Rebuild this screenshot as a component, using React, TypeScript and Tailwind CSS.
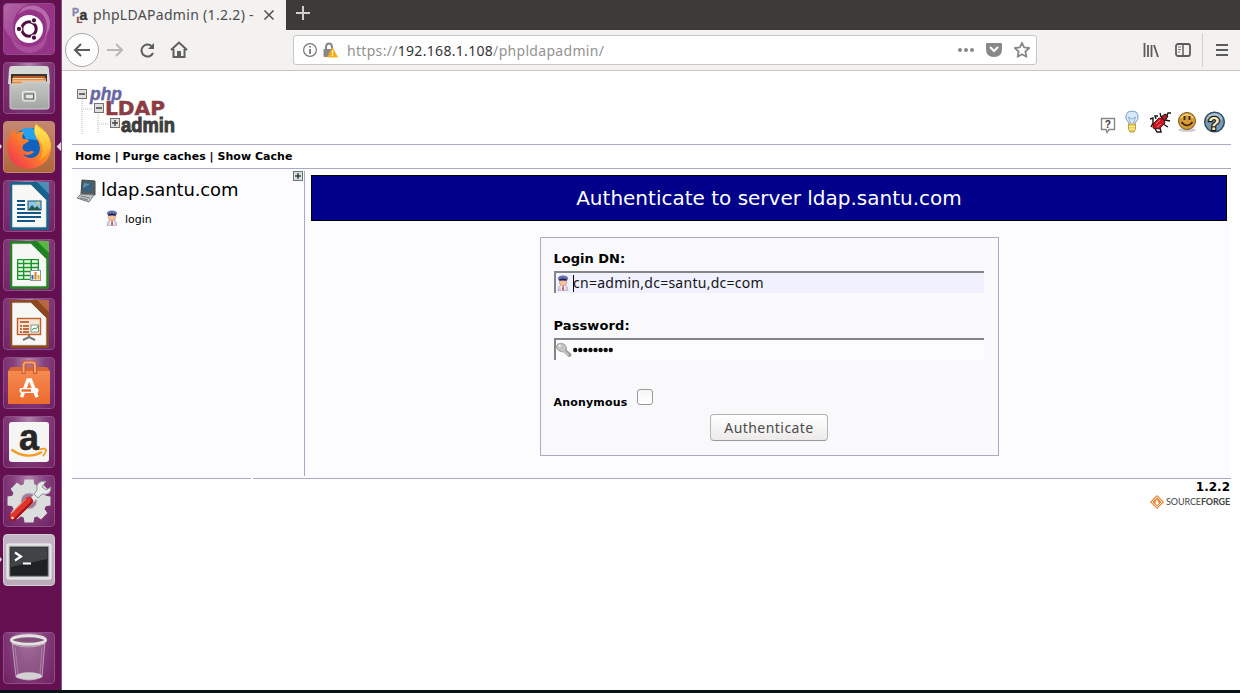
import React from "react";
import type { ReactNode } from "react";

function Tile({ children, tone = "purple" }: { children: ReactNode; tone?: "purple" | "orange" | "silver" }) {
  const tones = {
    purple: "border-[#8d4f87] bg-[radial-gradient(ellipse_at_top,#b184ac_0%,#86407d_45%,#6f2163_100%)]",
    orange: "border-[#c08a72] bg-gradient-to-b from-[#c4876f] to-[#b1663a]",
    silver: "border-[#d5cdd6] bg-gradient-to-b from-[#c3b7c5] to-[#b9abb9]",
  };
  return (
    <div className={`h-[52px] w-[52px] shrink-0 overflow-hidden rounded-[4px] border ${tones[tone]}`}>
      <svg viewBox="0 0 52 52" className="-m-px block h-[52px] w-[52px]">{children}</svg>
    </div>
  );
}

function Document({ color, light, children }: { color: string; light: string; children: ReactNode }) {
  return (
    <>
      <path d="M7 2H39L46 9V48Q46 50 44 50H9Q7 50 7 48Z" fill={color} />
      <path d="M34 2H46V14Z" fill={light} opacity=".85" />
      <path d="M31 2L46 17" stroke={color} strokeWidth="2" />
      <path d="M9.5 5H28L43 20V47H9.5Z" fill="#f7f7f5" stroke="#d9dddd" strokeWidth=".7" />
      {children}
    </>
  );
}

function Dock() {
  return (
    <nav className="relative flex h-[690px] w-[62px] shrink-0 flex-col gap-[7px] border-r border-[#8c5284] bg-[#641050] pl-[3px] pt-[3px]">
      <Tile>
        <defs>
          <linearGradient id="swirl" x1="0" y1="0" x2="1" y2="1"><stop offset="0" stopColor="#c98abf" /><stop offset="1" stopColor="#973087" /></linearGradient>
        </defs>
        <rect width="52" height="52" fill="#953486" />
        <path d="M0 0H30Q12 4 10 22Q9 34 20 41Q4 38 0 20Z" fill="url(#swirl)" opacity=".6" />
        <path d="M14 12Q26 2 38 10Q47 18 42 34Q52 20 42 8Q32 -1 20 5Z" fill="#d19bca" opacity=".55" />
        <path d="M44 26Q42 42 26 44Q14 43 8 34Q12 50 28 50Q46 47 44 26Z" fill="#bb67ae" opacity=".5" />
        <circle cx="26" cy="26" r="14" fill="#fff" />
        <circle cx="26" cy="26" r="7.2" fill="none" stroke="#50103f" strokeWidth="3" />
        <g fill="#50103f" stroke="#fff" strokeWidth="1.1"><circle cx="16" cy="26" r="2.7" /><circle cx="31" cy="17.3" r="2.7" /><circle cx="31" cy="34.7" r="2.7" /></g>
      </Tile>
      <Tile>
        <defs>
          <linearGradient id="drawer" x1="0" y1="0" x2="0" y2="1"><stop offset="0" stopColor="#c6c8c6" /><stop offset="1" stopColor="#a3a5a3" /></linearGradient>
        </defs>
        <path d="M6 8Q6 4 9 4H43Q46 4 46 8L47 22H5Z" fill="#d6d8d5" />
        <path d="M8 12H44V24H8Z" fill="#3c352e" /><path d="M10 14H42V24H10Z" fill="#bb5a26" />
        <path d="M9 16H43V24H9Z" fill="#e58b4b" /><path d="M10 19H43M10 16.5H40" stroke="#f8ddb4" />
        <path d="M7 22H18L20 20H46V45Q46 47 44 47H9Q7 47 7 45Z" fill="url(#drawer)" stroke="#d0d1d0" />
        <rect x="19.5" y="29.5" width="13" height="9.5" rx="1.5" fill="#c8cbc8" stroke="#ededed" />
        <rect x="22" y="32" width="8.5" height="5" fill="#e6e6e6" stroke="#575b58" />
      </Tile>
      <Tile tone="orange">
        <defs>
          <linearGradient id="fox" x1="1" y1="0" x2="0" y2="1"><stop offset="0" stopColor="#ffd23a" /><stop offset=".45" stopColor="#ff8727" /><stop offset="1" stopColor="#ed2458" /></linearGradient>
          <linearGradient id="flame" x1="0" y1="0" x2="0" y2="1"><stop offset="0" stopColor="#fff15c" /><stop offset="1" stopColor="#ff9e20" /></linearGradient>
        </defs>
        <circle cx="27" cy="25" r="18" fill="#1261bd" />
        <path d="M18 9Q27 4 34 10L34 19L23 18Z" fill="#24a2ec" />
        <path d="M4 25Q5 15 11 8L13 13Q17 10 21 11Q18 16 20 18Q26 18 26 20L20 24Q18 30 25 31Q29 29 31 31Q26 36 20 33Q25 39 32 36Q39 32 36 22Q29 12 33 3Q48 12 48 27Q46 46 26 48Q5 46 4 25Z" fill="url(#fox)" />
        <path d="M33 3Q28 12 37 20Q43 30 36 39Q46 35 48 25Q47 15 42 11Q35 7 33 3Z" fill="url(#flame)" />
      </Tile>
      <Tile>
        <Document color="#17618c" light="#5096bd">
          <path d="M14 21H22M14 25H22M14 29H22M14 33H38M14 37H38M14 41H32" stroke="#135786" strokeWidth="2" />
          <rect x="25" y="21" width="13" height="9" fill="#8dc7e8" stroke="#135786" /><path d="M25 30L29 25L32 28L34 26L38 30Z" fill="#285846" /><circle cx="35" cy="23" r="1.5" fill="#f6c94b" />
        </Document>
      </Tile>
      <Tile>
        <Document color="#218322" light="#5bc642">
          <rect x="14" y="20" width="22" height="21" fill="#159b24" />
          {[22.5, 26.5, 30.5, 34.5, 38.5].map((y) => <path key={y} d={`M15.3 ${y}H20M21.3 ${y}H27.5M29 ${y}H34.7`} stroke="#eff6ed" strokeWidth="2.3" />)}
          <rect x="27.5" y="31.5" width="10" height="10" fill="#fff" stroke="#8b9393" /><path d="M29.5 36V40.5" stroke="#276eac" strokeWidth="2" /><path d="M32.5 33V40.5" stroke="#e87b21" strokeWidth="2" /><path d="M35.5 36V40.5" stroke="#e7ad1c" strokeWidth="2" />
        </Document>
      </Tile>
      <Tile>
        <Document color="#8c481f" light="#bd7142">
          <path d="M26 37V40M20 42L26 39L32 42" fill="none" stroke="#777" strokeWidth="2" />
          <rect x="14.5" y="20.5" width="23" height="16" fill="#fae4d4" stroke="#c65d27" strokeWidth="1.4" />
          <path d="M17 24H26M20 28H26M20 31H26M20 34H26" stroke="#a9481b" strokeWidth="1.7" /><path d="M17 28H19M17 31H19M17 34H19" stroke="#a9481b" strokeWidth="1.7" />
          <rect x="28" y="27" width="7.5" height="7" fill="#fff" stroke="#82978b" /><path d="M29 32L31 30L33 31L35 28" fill="none" stroke="#28a745" />
        </Document>
      </Tile>
      <Tile>
        <defs><linearGradient id="bag" x1="0" y1="0" x2="0" y2="1"><stop offset="0" stopColor="#f58a50" /><stop offset="1" stopColor="#ed6b30" /></linearGradient></defs>
        <path d="M5 14L8 10H44L47 14V16H5Z" fill="#d96635" /><path d="M5 14H47V47H5Z" fill="url(#bag)" />
        <path d="M20.5 17V8Q20.5 5.5 23 5.5H29.5Q32 5.5 32 8V17" fill="none" stroke="#c9582f" strokeWidth="4" /><path d="M20.5 16V8Q20.5 5.5 23 5.5H29.5Q32 5.5 32 8V16" fill="none" stroke="#f3a278" strokeWidth="2" />
        <path d="M18.5 40L25 23H27.5L34 40" fill="none" stroke="#fff" strokeWidth="3.5" /><rect x="16.5" y="31" width="19" height="5" rx="2" fill="#fff" /><path d="M18.5 33.5H28" stroke="#ef6c2f" strokeWidth="2.5" />
      </Tile>
      <Tile>
        <rect x="6" y="6" width="40" height="40" rx="3" fill="#f5f5f4" />
        <text x="16" y="33.5" fontFamily="Liberation Sans, sans-serif" fontSize="37" fontWeight="700" fill="#272727" stroke="#272727" strokeWidth=".6" textLength="20" lengthAdjust="spacingAndGlyphs">a</text>
        <path d="M8.5 33.5Q23 44.5 39 36" fill="none" stroke="#f79a1d" strokeWidth="2.3" /><path d="M36 33.5Q43 31.5 43 34Q43 37 40 40" fill="none" stroke="#f79a1d" strokeWidth="1.8" />
      </Tile>
      <Tile>
        <g transform="translate(26 26)" fill="#dcdedd">
          {["rotate(0)", "rotate(45)", "rotate(90)", "rotate(135)"].map((turn) => <path key={turn} transform={turn} d="M-4.5 -21.5H4.5L5.5 -15H-5.5ZM-4.5 21.5H4.5L5.5 15H-5.5Z" />)}
          <circle r="12.5" fill="none" stroke="#dcdedd" strokeWidth="10" />
          <circle r="8" fill="#9f7d9b" stroke="#c4c6c5" />
        </g>
        <path d="M26 28L37 17" stroke="#e6e8e8" strokeWidth="5" />
        <path d="M43 6Q32 6 34 15L31 19L35 23L39 19Q48 21 48 12L43 15L39 12Z" fill="#e9ebeb" stroke="#8e9393" />
        <path d="M10 42L26 26" stroke="#a91418" strokeWidth="8" strokeLinecap="round" /><path d="M9.5 41L25.5 25" stroke="#df352d" strokeWidth="5.5" strokeLinecap="round" /><path d="M8 39L23 24" stroke="#f47d67" /><circle cx="9.5" cy="43" r="1.2" fill="#fff" />
      </Tile>
      <Tile tone="silver">
        <rect x="4" y="10" width="44" height="35" rx="1" fill="#d7d8d7" stroke="#f2f3f2" /><rect x="7" y="13" width="38" height="29" fill="#1e2223" stroke="#4b4f50" /><path d="M8 14H44V25L8 33Z" fill="#555859" opacity=".65" /><path d="M12 18.5L18 22.5L12 26.5M20 29.5H28" fill="none" stroke="#fff" strokeWidth="2.2" />
      </Tile>
      <div className="mt-[39px]">
        <Tile>
          <path d="M9 9L13 45Q26 51 39 45L42 9" fill="#9b6c94" fillOpacity=".55" stroke="#b99bb7" /><ellipse cx="26" cy="44" rx="13" ry="3.7" fill="#d5d0d3" /><ellipse cx="25.5" cy="8" rx="17" ry="4.3" fill="#84517c" stroke="#e2e2df" strokeWidth="3" /><path d="M12 15L15 42M39 15L37 42" stroke="#c8b5c6" opacity=".45" /><path d="M9 12Q25 18 42 12" fill="none" stroke="#bcacb8" />
        </Tile>
      </div>
      <svg className="absolute left-0 top-[140px] h-3 w-[62px]" viewBox="0 0 62 12"><path d="M0 4L2 6.5L0 9ZM61 2V11L56.5 6.5Z" fill="#e7d7e3" /></svg>
      <svg className="absolute left-0 top-[554px] h-3 w-2" viewBox="0 0 8 12"><path d="M0 3L2 5.5L0 8Z" fill="#e7d7e3" /></svg>
    </nav>
  );
}

function Person({ className }: { className: string }) {
  return (
    <svg viewBox="0 0 12 16" className={className}>
      <path d="M1 15.5Q1 11 4 10H8Q11 11 11 15.5Z" fill="#d3d3e4" stroke="#a3a3bf" strokeWidth=".6" /><path d="M4 10L6 12L8 10V15H4Z" fill="#fff" /><path d="M5.4 11H6.7L7.2 15.3H5Z" fill="#d94b4b" />
      <ellipse cx="6" cy="6.8" rx="3.8" ry="3.9" fill="#f5c09c" stroke="#c08b76" strokeWidth=".5" /><path d="M.8 3.5Q1.5 .5 6 .5Q10.5 .5 11.2 3.5L10 5.5Q6 4 2 5.5Z" fill="#6272ad" /><path d="M2 4.2Q6 3 10 4.2L9.5 5.8Q6 5 2.5 5.8Z" fill="#1e2054" />
    </svg>
  );
}

function Browser() {
  return (
    <header>
      <div className="flex h-[30px] bg-[#3c3b37]">
        <div className="flex w-[224px] items-center bg-[#f3f2f1] pl-[10px]">
          <svg viewBox="0 0 16 16" className="-mt-[1px] h-4 w-4 shrink-0"><text x="0" y="9" fontFamily="Liberation Sans" fontSize="10.5" fontWeight="bold" fill="#8787ad" stroke="#8787ad" strokeWidth=".4">P</text><text x="4.5" y="15.5" fontFamily="Liberation Sans" fontSize="9.5" fontWeight="bold" fill="#8b4149" stroke="#8b4149" strokeWidth=".4">L</text><text x="7.5" y="12.5" fontFamily="Liberation Sans" fontSize="14" fontWeight="bold" fill="#353535" stroke="#353535" strokeWidth=".4">a</text></svg>
          <span className="ml-[5px] -mt-[2px] w-[165px] shrink-0 whitespace-nowrap font-['Noto_Sans',sans-serif] text-[14px] tracking-[0.31px] text-[#4c4c4c]">phpLDAPadmin (1.2.2) -</span>
          <svg viewBox="0 0 12 12" className="ml-[5px] -mt-px h-3 w-3 shrink-0"><path d="M1.5 1.5L10.5 10.5M10.5 1.5L1.5 10.5" stroke="#555" strokeWidth="1.6" /></svg>
        </div>
        <svg viewBox="0 0 18 18" className="ml-2 mt-1 h-[18px] w-[18px]"><path d="M2 9H16M9 2V16" stroke="#d0cfcb" strokeWidth="2" /></svg>
      </div>
      <div className="flex h-[41px] items-center border-b border-[#c8c6c3] bg-[#f3f2f1] pl-[3px]">
        <div className="flex h-[34px] w-[34px] shrink-0 items-center justify-center rounded-full border border-[#aaa8a5] bg-[#fdfdfd]"><svg viewBox="0 0 18 16" className="h-4 w-[18px]"><path d="M17 8H2M8 2L2 8L8 14" fill="none" stroke="#5c5c5c" strokeWidth="2" /></svg></div>
        <svg viewBox="0 0 18 16" className="ml-[7px] h-4 w-[18px] shrink-0"><path d="M1 8H16M10 2L16 8L10 14" fill="none" stroke="#b9b8b6" strokeWidth="2" /></svg>
        <svg viewBox="0 0 16 16" className="ml-[15px] h-4 w-4 shrink-0"><path d="M14 11A6 6 0 1 1 12.5 4" fill="none" stroke="#5c5c5c" strokeWidth="2" /><path d="M15 1V7H9Z" fill="#5c5c5c" /></svg>
        <svg viewBox="0 0 18 18" className="ml-[15px] h-[18px] w-[18px] shrink-0"><path d="M1 9L9 1.5L17 9M3.5 8V16H14.5V8" fill="none" stroke="#5f5f5f" strokeWidth="2" /><path d="M7 16V10H11V16Z" fill="#5f5f5f" /></svg>
        <div className="ml-[105px] flex h-[30px] w-[744px] shrink-0 items-center rounded-[3px] border border-[#c9c7c4] bg-white pl-[8px]">
          <svg viewBox="0 0 16 16" className="h-4 w-4"><circle cx="8" cy="8" r="6.4" fill="none" stroke="#777" strokeWidth="1.2" /><path d="M8 7V12M8 4V5.5" stroke="#666" strokeWidth="1.6" /></svg>
          <svg viewBox="0 0 16 16" className="ml-[4px] h-4 w-4"><path d="M4 8V5Q4 1.5 7 1.5Q10 1.5 10 5V8" fill="none" stroke="#888" strokeWidth="2" /><rect x="1.5" y="7" width="10" height="8" rx="1" fill="#888" /><path d="M10.5 6L15.5 15H5.5Z" fill="#f4ae16" stroke="#f4ae16" strokeWidth=".8" strokeLinejoin="round" /><path d="M10.5 8.5V11.5M10.5 12.5V14" stroke="#fff" strokeWidth="1.2" /></svg>
          <span className="ml-[9px] whitespace-nowrap font-['Noto_Sans',sans-serif] text-[14px] tracking-[0.31px] text-[#929292]">https://<span className="text-[#333]">192.168.1.108</span>/phpldapadmin/</span>
          <svg viewBox="0 0 18 6" className="ml-auto h-[6px] w-[18px]"><g fill="#888"><circle cx="3" cy="3" r="2" /><circle cx="9" cy="3" r="2" /><circle cx="15" cy="3" r="2" /></g></svg>
          <svg viewBox="0 0 16 16" className="ml-[11px] h-4 w-4"><path d="M1 1H15Q16 1 16 2V7Q16 15 8 15Q0 15 0 7V2Q0 1 1 1Z" fill="#888" /><path d="M4.5 5.5L8 9L11.5 5.5" fill="none" stroke="#fff" strokeWidth="2" strokeLinecap="round" /></svg>
          <svg viewBox="0 0 18 18" className="ml-[11px] mr-[5px] h-[18px] w-[18px]"><path d="M9 1.8L11.1 6.4L16.2 7L12.4 10.5L13.4 15.8L9 13.2L4.6 15.8L5.6 10.5L1.8 7L6.9 6.4Z" fill="none" stroke="#888" strokeWidth="1.8" strokeLinejoin="round" /></svg>
        </div>
        <svg viewBox="0 0 16 16" className="ml-[106px] h-4 w-4 shrink-0"><path d="M1.5 1V15M5 3V15M8.5 3V15M11 3L15 15" stroke="#5c5c5c" strokeWidth="1.8" /></svg>
        <svg viewBox="0 0 16 16" className="ml-4 h-4 w-4 shrink-0"><rect x="1" y="2" width="14" height="12" rx="2" fill="none" stroke="#5c5c5c" strokeWidth="1.8" /><path d="M8 2V14" stroke="#5c5c5c" strokeWidth="1.5" /><path d="M3 5H6M3 7.5H6M3 10H5" stroke="#777" /></svg>
        <div className="ml-[11px] h-[34px] w-px shrink-0 bg-[#d2d0ce]" />
        <svg viewBox="0 0 14 12" className="ml-3 h-3 w-[14px] shrink-0"><path d="M1 1H13M1 6H13M1 11H13" stroke="#5c5c5c" strokeWidth="1.8" /></svg>
      </div>
    </header>
  );
}

function Logo() {
  return (
    <svg viewBox="0 0 102 54" className="mt-[14px] h-[54px] w-[102px] shrink-0">
      <path d="M6 14V49M7 24H17M22 29V49M23 39H33" stroke="#bbb" strokeDasharray="1 1" />
      <text x="14" y="15" fontFamily="Liberation Sans, sans-serif" fontSize="18" fontWeight="bold" fontStyle="italic" fill="#6666a3" stroke="#6666a3" strokeWidth=".4" textLength="32" lengthAdjust="spacingAndGlyphs">php</text>
      <text x="29" y="30" fontFamily="DejaVu Sans, sans-serif" fontSize="19.5" fontWeight="bold" fill="#8b3d43" stroke="#8b3d43" strokeWidth=".5" textLength="60" lengthAdjust="spacingAndGlyphs">LDAP</text>
      <text x="45" y="47" fontFamily="Liberation Sans, sans-serif" fontSize="21" fontWeight="bold" fill="#3c3d3d" stroke="#3c3d3d" strokeWidth="1" textLength="54" lengthAdjust="spacingAndGlyphs">admin</text>
      <g fill="#dfe0dd" stroke="#737373"><rect x="1.5" y="4.5" width="9" height="9" /><rect x="18.5" y="18.5" width="9" height="9" /><rect x="34.5" y="33.5" width="9" height="9" /></g>
      <path d="M3 9H9M20 23H26M36 38H42M39 35V41" stroke="#444" strokeWidth="1.4" />
    </svg>
  );
}

function HeaderIcons() {
  return (
    <div className="mt-[39px] flex h-6 items-center gap-[4px] pr-[5px]">
      <svg viewBox="0 0 18 18" className="mr-[-1px] mt-[5px] h-[18px] w-[18px]"><path d="M2.5 2.5H15.5V13.5H10L8 16.5L7 13.5H2.5Z" fill="#fff" stroke="#888" strokeWidth="1.4" /><text x="5.8" y="12" fontFamily="Liberation Sans" fontWeight="bold" fontSize="10" fill="#333">?</text></svg>
      <svg viewBox="0 0 24 24" className="h-6 w-6"><path d="M9 15V13Q4.5 9 6 5Q7 1 12 1Q17 1 18 5Q19 10 15 13V15Z" fill="#d8e9fa" stroke="#7e9fce" /><path d="M10.5 13L8.5 7L12 9L15.5 7L13.5 13" fill="none" stroke="#91acd0" strokeWidth="1" /><path d="M8.5 14H15.5V19L14 22H10L8.5 19Z" fill="#e9ce59" stroke="#bf9d3a" /><path d="M9 16.5H15M9 19H15" stroke="#fff2a1" /></svg>
      <svg viewBox="0 0 24 24" className="h-6 w-6"><path d="M2 9L5 8V13L3 17M6 17L9 22H13L12 18M13 7L12 3M17 10L22 11M15 14L20 17M18 7L20 3L23 3M8 9L7 6L10 6" fill="none" stroke="#171717" strokeWidth="1.4" /><path d="M5 14L11 8L16 9L17 13L11 19L5 18Z" fill="#ca1621" stroke="#600912" /><path d="M13 7L17 4L20 6L17 11Z" fill="#b01a28" stroke="#111" /><path d="M8 14L12 10M9 17L13 14" stroke="#f47780" /></svg>
      <svg viewBox="0 0 22 22" className="ml-[-1px] mr-px h-[22px] w-[22px]"><ellipse cx="12" cy="19" rx="9" ry="2" fill="#aaa" opacity=".55" /><circle cx="12" cy="10" r="8.5" fill="#d89a35" stroke="#7c551e" /><path d="M6 7Q12 0 18 7" fill="none" stroke="#f4cd72" strokeWidth="1.5" /><path d="M9.5 5V9M14.5 5V9" stroke="#332611" strokeWidth="1.8" /><path d="M6.5 11Q12 18 17.5 11" fill="none" stroke="#332611" strokeWidth="1.6" /></svg>
      <svg viewBox="0 0 24 24" className="h-6 w-6"><circle cx="12.5" cy="12" r="9.8" fill="#7898b2" stroke="#314d66" strokeWidth="1.5" /><path d="M4 9Q7 3 13 3Q18 3 21 9Q13 12 4 9Z" fill="#c0d4e0" opacity=".7" /><text x="6.2" y="20" fontFamily="Liberation Sans" fontSize="19" fontWeight="bold" fill="#f9edb5" stroke="#171717" strokeWidth="2.4" paintOrder="stroke">?</text></svg>
    </div>
  );
}

function LoginForm() {
  return (
    <form className="mx-auto mt-[16px] flex h-[219px] w-[459px] flex-col border border-[#aaaac4] bg-[#f9f9fc] px-[13px] pt-[12px] text-black" onSubmit={(e) => e.preventDefault()}>
      <span className="h-[21px] text-[13px] font-bold leading-[18px]">Login DN:</span>
      <div className="flex h-[22px] w-[430px] items-center border-l-2 border-t-2 border-[#858585] bg-[#f0f0ff]">
        <Person className="h-4 w-[14px]" /><span className="ml-[3px] h-[17px] w-px bg-black" />
        <span className="-ml-[0.5px] -mt-px whitespace-nowrap font-['Noto_Sans',sans-serif] text-[14px] leading-[18px] tracking-[0.26px] text-[#151515]">cn=admin,dc=santu,dc=com</span>
      </div>
      <span className="mt-[24px] h-[21px] text-[13px] font-bold leading-[18px] tracking-[0.1px]">Password:</span>
      <div className="flex h-[22px] w-[430px] items-center border-l-2 border-t-2 border-[#858585] bg-[#fcfcff]">
        <svg viewBox="0 0 16 16" className="h-4 w-4"><path d="M8 8L13.5 13" stroke="#9d9d9d" strokeWidth="4" strokeLinecap="round" /><ellipse cx="5.5" cy="5.5" rx="5" ry="4" transform="rotate(25 5.5 5.5)" fill="#c4c4c4" stroke="#999" /><path d="M7 8L12.5 13" stroke="#ccc" strokeWidth="1.5" /><circle cx="3.8" cy="4" r="1" fill="#fff" /></svg>
        <svg viewBox="0 0 42 8" className="ml-[0.5px] h-2 w-[42px]">{[0, 1, 2, 3, 4, 5, 6, 7].map((n) => <circle key={n} cx={3.2 + n * 5.08} cy="4" r="2.2" fill="#111" />)}</svg>
      </div>
      <div className="mt-[28px] flex h-[20px]"><span className="mt-[7px] text-[11px] font-bold leading-4 tracking-[0.18px]">Anonymous</span><span className="ml-[10px] mt-px h-4 w-4 rounded-[3px] border border-[#999] bg-gradient-to-b from-[#f5f5f5] to-white" /></div>
      <button className="mt-[6px] h-[27px] w-[118px] shrink-0 self-center whitespace-nowrap rounded-[4px] border border-[#b5b3b0] border-b-[#999] bg-gradient-to-b from-white to-[#ecebe9] font-['Noto_Sans',sans-serif] text-[14px] leading-[24px] tracking-[0.45px] text-[#4c4c4c]">Authenticate</button>
    </form>
  );
}

export default function App() {
  return (
    <div className="h-[693px] w-[1240px] overflow-hidden bg-[#071219] font-['DejaVu_Sans',sans-serif]">
      <div className="flex h-[690px]">
        <Dock />
        <div className="w-[1178px] bg-white">
          <Browser />
          <main className="ml-[10px] w-[1159px] text-black">
            <div className="flex h-[73px] justify-between pl-[4px]"><Logo /><HeaderIcons /></div>
            <div className="h-[25px] whitespace-nowrap border-y border-[#a9a9c8] pl-[3px] text-[11px] font-bold leading-[23px] tracking-[0.03px]">Home | Purge caches | Show Cache</div>
            <div className="flex h-[309px] bg-[#fcfcff]">
              <aside className="mt-[2px] flex h-[305px] w-[233px] justify-between border-r border-[#a9a9c8]">
                <div className="pl-[4px] pt-[6px]">
                  <div className="flex h-[24px] items-center">
                    <svg viewBox="0 0 24 26" className="mt-[3px] h-[26px] w-6"><path d="M6 2L19 3V17L5 16Z" fill="#555d5e" stroke="#424a4b" /><path d="M7 4L16 5V14L6 13Z" fill="#365f80" /><path d="M8 5L14 6L7 10Z" fill="#6492b2" /><path d="M5 16L18 17L13 24L1 20Z" fill="#bfc5c3" stroke="#777e7d" /><path d="M5 18L14 20M4 20L12 22" stroke="#757c7b" /></svg>
                    <span className="ml-[1px] whitespace-nowrap text-[18px] tracking-[-0.12px]">ldap.santu.com</span>
                  </div>
                  <div className="ml-[30px] mt-[7px] flex h-[20px] items-center"><Person className="h-[16px] w-[12px]" /><span className="ml-[7px] mt-[4px] text-[11px]">login</span></div>
                </div>
                <svg viewBox="0 0 10 10" className="mr-px h-[10px] w-[10px]"><rect x=".5" y=".5" width="9" height="9" fill="#d6e1e0" stroke="#687778" /><path d="M2 5H8M5 2V8" stroke="#000" /></svg>
              </aside>
              <section className="ml-[6px] mt-[6px] w-[916px]">
                <div className="flex h-[46px] items-center justify-center border border-black bg-[#00008b] text-[20px] text-white"><span className="whitespace-nowrap">Authenticate to server ldap.santu.com</span></div>
                <LoginForm />
              </section>
            </div>
            <div className="flex h-px gap-[2px]"><div className="w-[179px] bg-[#a9a9c8]" /><div className="grow bg-[#a9a9c8]" /></div>
            <footer className="flex flex-col items-end pr-px">
              <span className="h-[15px] text-[12px] font-bold leading-4">1.2.2</span>
              <div className="flex h-[15px] items-center">
                <svg viewBox="0 0 14 14" className="h-[14px] w-[14px]"><path d="M7 0L14 7L7 14L0 7Z" fill="#ed8632" /><path d="M7 2L12 7L7 12L2 7Z" fill="none" stroke="#fff" strokeWidth=".8" /><path d="M7 4Q7 6 9 8Q8 10 7 10Q4 9 7 4Z" fill="#fff" /></svg>
                <span className="ml-[2px] whitespace-nowrap font-[Lato,sans-serif] text-[9px] tracking-[-0.12px] text-[#444]">SOURCE<strong className="font-bold">FORGE</strong></span>
              </div>
            </footer>
          </main>
        </div>
      </div>
    </div>
  );
}
